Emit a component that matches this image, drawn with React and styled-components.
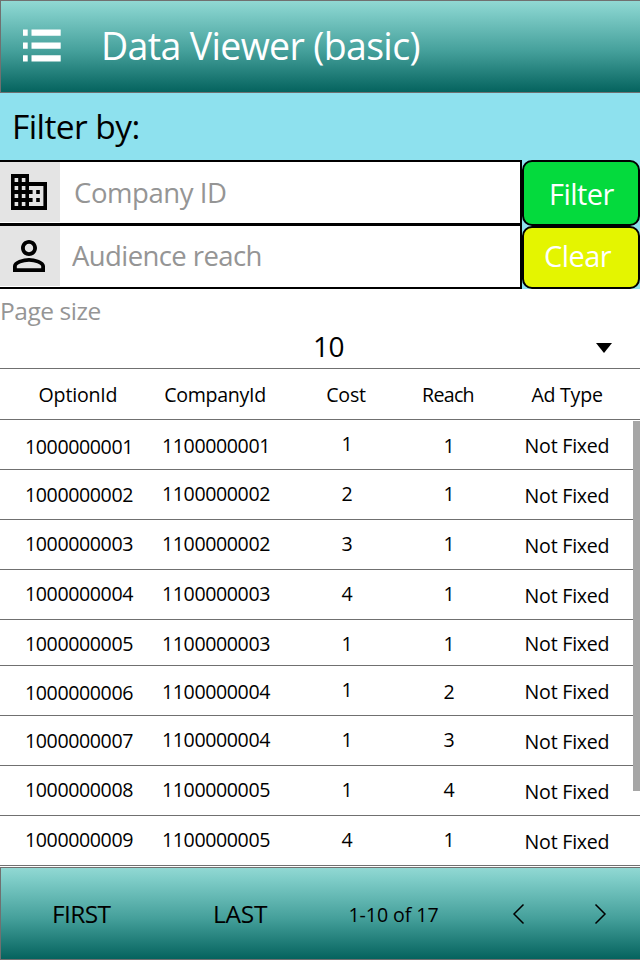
import React from 'react';
import styled, { createGlobalStyle } from 'styled-components';

const Global = createGlobalStyle`
  * { box-sizing: border-box; }
  body { margin: 0; background: #fff; }
  button, input { font: inherit; }
`;

const Page = styled.main`
  width: 640px;
  height: 960px;
  display: flex;
  flex-direction: column;
  overflow: hidden;
  color: #000;
  font-family: "Open Sans", "Noto Sans", sans-serif;
  background: #fff;
`;

const Bar = styled.div`
  display: flex;
  flex: none;
  height: 93px;
  border: 1px solid #707070;
  border-right: 0;
  background: linear-gradient(#91d8d3 0%, #7fcdc8 12%, #45a09b 55%, #05635e 100%);
`;

const MenuIcon = styled.svg`
  width: 38px;
  height: 34px;
  margin: 28px 0 0 22px;
  fill: #fff;
`;

const Title = styled.h1`
  margin: 0 0 0 40px;
  font-size: 37.5px;
  font-weight: 400;
  line-height: 89px;
  letter-spacing: -0.65px;
  color: #fff;
  white-space: nowrap;
`;

const FilterPanel = styled.section`
  flex: none;
  height: 196px;
  background: #8ee1ee;
`;

const FilterHeading = styled.h2`
  height: 67px;
  margin: 0;
  padding-left: 12px;
  font-size: 33.5px;
  font-weight: 400;
  line-height: 67px;
  letter-spacing: -0.57px;
`;

const FilterGrid = styled.div`
  display: grid;
  grid-template-columns: 522px 118px;
`;

const Fields = styled.div`
  display: flex;
  flex-direction: column;
`;

const Field = styled.label`
  display: flex;
  height: 65px;
  border: 2px solid #000;
  border-left: 0;
  background: #fff;

  & + & { margin-top: -1px; }
`;

const FieldIcon = styled.span`
  display: grid;
  place-items: center;
  width: 60px;
  height: 60px;
  padding-right: 2px;
  background: #e4e4e4;
`;

const CompanyGlyph = styled.svg`
  width: 36px;
  height: 36px;
`;

const PersonGlyph = styled.svg`
  width: 48px;
  height: 48px;
`;

const Input = styled.input`
  flex: 1;
  min-width: 0;
  padding: 0 0 ${(p) => p.$lift}px ${(p) => p.$inset}px;
  border: 0;
  outline: 0;
  background: none;
  font-size: 27.5px;
  letter-spacing: ${(p) => p.$spacing}px;

  &::placeholder { color: #959595; opacity: 1; }
`;

const Buttons = styled.div`
  display: grid;
  grid-template-rows: 66px 63px;
`;

const ActionButton = styled.button`
  display: flex;
  padding: 0 0 0 ${(p) => p.$inset}px;
  border: 2px solid #000;
  border-radius: 10px;
  background: ${(p) => p.$tone};
  color: #fff;
  font-size: 29px;
  line-height: ${(p) => p.$line}px;
  letter-spacing: -0.55px;
`;

const PageSize = styled.section`
  flex: none;
  display: flex;
  flex-direction: column;
  height: 80px;
  border-bottom: 1px solid #707070;
`;

const SizeLabel = styled.span`
  height: 36px;
  font-size: 24.5px;
  line-height: 44px;
  letter-spacing: -0.45px;
  color: #959595;
`;

const SizeSelect = styled.div`
  display: grid;
  grid-template-columns: 313px 1fr 44px;
  font-size: 28px;
  line-height: 43px;
`;

const SizeValue = styled.span`
  grid-column: 2;
  letter-spacing: -0.6px;
`;

const Caret = styled.svg`
  width: 16px;
  height: 10px;
  margin-top: 18px;
`;

const Table = styled.section`
  position: relative;
  flex: none;
  height: 498px;
`;

const Row = styled.div`
  display: grid;
  grid-template-columns: 158px 116px 146px 58px 112px;
  height: ${(p) => p.$height}px;
  border-bottom: 1px solid #707070;
  font-size: 19.6px;
  line-height: 20px;
`;

const Cell = styled.span`
  padding-top: ${(p) => p.$drop}px;
  text-align: center;
  letter-spacing: -0.4px;
  white-space: nowrap;
`;

const TypeCell = styled(Cell)`
  margin: 0 -33px 0 33px;
  letter-spacing: -0.24px;
`;

const HeadCell = styled(Cell)`
  padding: 16px 2px 0 0;
  letter-spacing: ${(p) => p.$spacing}px;
`;

const HeadTypeCell = styled(HeadCell)`
  margin: 0 -34px 0 34px;
`;

const ScrollThumb = styled.div`
  position: absolute;
  top: 52px;
  right: 0;
  width: 7px;
  height: 370px;
  background: #a6a6a6;
`;

const Pager = styled(Bar)`
  padding-left: 51px;
`;

const PageLink = styled.button`
  flex: none;
  width: ${(p) => p.$width}px;
  padding: 0;
  border: 0;
  background: none;
  color: #000;
  text-align: left;
  font-size: 24.5px;
  line-height: 89px;
  letter-spacing: ${(p) => p.$spacing}px;
`;

const Range = styled.span`
  flex: none;
  width: 162px;
  font-size: 19.6px;
  line-height: 93px;
  letter-spacing: -0.08px;
`;

const Arrow = styled.svg`
  flex: none;
  width: 14px;
  height: 22px;
  margin: 35px 68px 0 0;
  fill: none;
  stroke: #000;
  stroke-width: 1.5;
`;

const rows = [
  [50, ['1000000001', 17], ['1100000001', 16], ['1', 14], ['1', 16], 16],
  [50, ['1000000002', 15], ['1100000002', 14], ['2', 14], ['1', 14], 16],
  [50, ['1000000003', 14], ['1100000002', 14], ['3', 14], ['1', 14], 16],
  [50, ['1000000004', 14], ['1100000003', 14], ['4', 14], ['1', 14], 16],
  [46, ['1000000005', 14], ['1100000003', 14], ['1', 14], ['1', 14], 14],
  [50, ['1000000006', 17], ['1100000004', 16], ['1', 14], ['2', 16], 16],
  [50, ['1000000007', 15], ['1100000004', 14], ['1', 14], ['3', 14], 16],
  [50, ['1000000008', 14], ['1100000005', 14], ['1', 14], ['4', 14], 16],
  [50, ['1000000009', 14], ['1100000005', 14], ['4', 14], ['1', 14], 16],
];

export default function App() {
  return (
    <Page>
      <Global />
      <Bar as="header">
        <MenuIcon viewBox="0 0 38 34">
          <path d="M0 .5h4.700v6.300H0zM8.500.5H37.700v6.300H8.500zM0 13.400h4.700v6.300H0zM8.500 13.400H37.700v6.300H8.500zM0 26.200h4.700v6.300H0zM8.500 26.200H37.700v6.300H8.500z" />
        </MenuIcon>
        <Title>Data Viewer (basic)</Title>
      </Bar>
      <FilterPanel>
        <FilterHeading>Filter by:</FilterHeading>
        <FilterGrid>
          <Fields>
            <Field>
              <FieldIcon>
                <CompanyGlyph viewBox="2 3 20 18" preserveAspectRatio="none">
                  <path d="M12 7V3H2v18h20V7H12zM6 19H4v-2h2v2zm0-4H4v-2h2v2zm0-4H4V9h2v2zm0-4H4V5h2v2zm4 12H8v-2h2v2zm0-4H8v-2h2v2zm0-4H8V9h2v2zm0-4H8V5h2v2zm10 12h-8v-2h2v-2h-2v-2h2v-2h-2V9h8v10zm-2-8h-2v2h2v-2zm0 4h-2v2h2v-2z" />
                </CompanyGlyph>
              </FieldIcon>
              <Input $inset={14} $lift={0} $spacing={-0.43} placeholder="Company ID" />
            </Field>
            <Field>
              <FieldIcon>
                <PersonGlyph viewBox="0 0 24 24">
                  <path d="M12 5.900c1.160 0 2.100.94 2.100 2.100s-.94 2.100-2.100 2.100S9.900 9.160 9.900 8s.94-2.100 2.100-2.100m0 9c2.970 0 6.100 1.460 6.100 2.100v1.100H5.900V17c0-.64 3.130-2.100 6.100-2.100M12 4C9.790 4 8 5.790 8 8s1.790 4 4 4 4-1.790 4-4-1.790-4-4-4zm0 9c-2.670 0-8 1.340-8 4v3h16v-3c0-2.660-5.330-4-8-4z" />
                </PersonGlyph>
              </FieldIcon>
              <Input $inset={12} $lift={2} $spacing={-0.59} placeholder="Audience reach" />
            </Field>
          </Fields>
          <Buttons>
            <ActionButton $tone="#04da3d" $inset={25} $line={63}>Filter</ActionButton>
            <ActionButton $tone="#e4f500" $inset={20} $line={55}>Clear</ActionButton>
          </Buttons>
        </FilterGrid>
      </FilterPanel>
      <PageSize>
        <SizeLabel>Page size</SizeLabel>
        <SizeSelect>
          <SizeValue>10</SizeValue>
          <Caret viewBox="0 0 16 10"><path d="M0 0h16L8 10z" /></Caret>
        </SizeSelect>
      </PageSize>
      <Table>
        <Row $height={51}>
          <HeadCell $spacing={-0.2}>OptionId</HeadCell>
          <HeadCell $spacing={-0.31}>CompanyId</HeadCell>
          <HeadCell $spacing={-0.2}>Cost</HeadCell>
          <HeadCell $spacing={-0.7}>Reach</HeadCell>
          <HeadTypeCell $spacing={-0.26}>Ad Type</HeadTypeCell>
        </Row>
        {rows.map(([height, option, company, cost, reach, typeDrop]) => (
          <Row key={option[0]} $height={height}>
            {[option, company, cost, reach].map(([text, drop], i) => (
              <Cell key={i} $drop={drop}>{text}</Cell>
            ))}
            <TypeCell $drop={typeDrop}>Not Fixed</TypeCell>
          </Row>
        ))}
        <ScrollThumb />
      </Table>
      <Pager as="footer">
        <PageLink $width={161} $spacing={-0.64}>FIRST</PageLink>
        <PageLink $width={135.5} $spacing={-0.24}>LAST</PageLink>
        <Range>1-10 of 17</Range>
        <Arrow viewBox="0 0 14 22"><path d="M12.500 1.500L3 11l9.500 9.500" /></Arrow>
        <Arrow viewBox="0 0 14 22"><path d="M2.500 1.500L12 11l-9.500 9.500" /></Arrow>
      </Pager>
    </Page>
  );
}
